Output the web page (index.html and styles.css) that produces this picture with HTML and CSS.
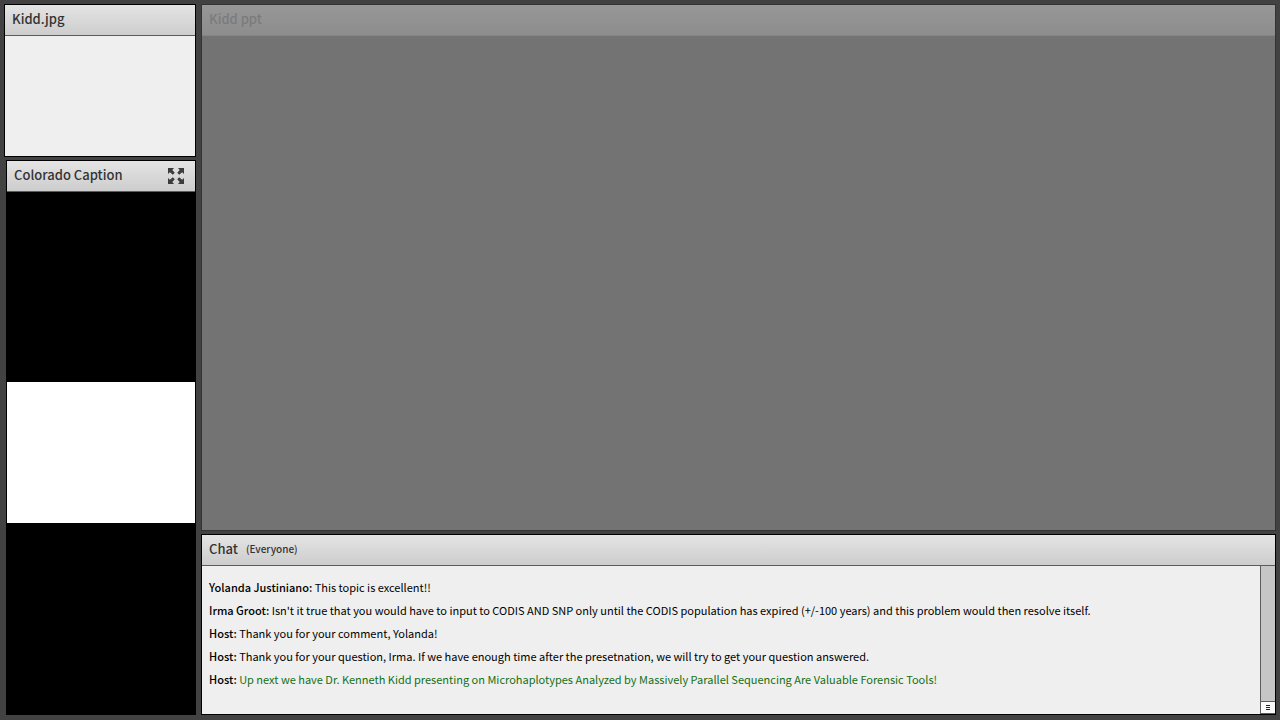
FILE: index.html
```
<!DOCTYPE html>
<html lang="en">
<head>
    <meta charset="UTF-8">
    <meta name="viewport" content="width=device-width, initial-scale=1.0">
    <title>Meeting Room</title>
    <link rel="stylesheet" href="styles.css">
</head>
<body>
    <div class="room">
        <aside class="sidebar">
            <section class="pod photo">
                <header class="pod-header">
                    <h2>Kidd.jpg</h2>
                </header>
                <div class="photo-body"></div>
            </section>
            <section class="pod caption">
                <header class="pod-header">
                    <h2>Colorado Caption</h2>
                    <button type="button" class="expand" aria-label="Full screen">
                        <svg width="16" height="16" viewBox="0 0 16 16" fill="#3c3c3c">
                            <path id="arrow" d="M0 0h6L4.300 1.900 6.800 4.800 4.800 6.800 1.900 4.300 0 6z"/>
                            <use href="#arrow" transform="rotate(90 8 8)"/>
                            <use href="#arrow" transform="rotate(180 8 8)"/>
                            <use href="#arrow" transform="rotate(270 8 8)"/>
                        </svg>
                    </button>
                </header>
                <div class="caption-body">
                    <div class="caption-screen"></div>
                </div>
            </section>
        </aside>
        <main class="stage">
            <section class="pod slides">
                <header class="pod-header">
                    <h2>Kidd ppt</h2>
                </header>
            </section>
            <section class="pod chat">
                <header class="pod-header">
                    <h2>Chat</h2>
                    <span class="audience">(Everyone)</span>
                </header>
                <div class="chat-body">
                    <div class="messages">
                        <p><strong>Yolanda Justiniano:</strong> This topic is excellent!!</p>
                        <p><strong>Irma Groot:</strong> Isn't it true that you would have to input to CODIS AND SNP only until the CODIS population has expired (+/-100 years) and this problem would then resolve itself.</p>
                        <p><strong>Host:</strong> Thank you for your comment, Yolanda!</p>
                        <p><strong>Host:</strong> Thank you for your question, Irma. If we have enough time after the presetnation, we will try to get your question answered.</p>
                        <p><strong>Host:</strong> <span class="notice">Up next we have Dr. Kenneth Kidd presenting on Microhaplotypes Analyzed by Massively Parallel Sequencing Are Valuable Forensic Tools!</span></p>
                    </div>
                    <div class="scrollbar">
                        <button type="button" class="scroll-thumb" aria-label="Scroll">
                            <svg width="5" height="6" viewBox="0 0 5 6" fill="#222">
                                <path d="M0 0h4v1H0zM0 2h4v1H0zM0 4h4v1H0z"/>
                            </svg>
                        </button>
                    </div>
                </div>
            </section>
        </main>
    </div>
</body>
</html>
```
FILE: styles.css
```
* {
    box-sizing: border-box;
}
body {
    margin: 0;
    background-color: #424242;
    color: #000;
    font-family: 'Noto Sans CJK SC', 'Open Sans', sans-serif;
    font-size: 11px;
}
.room {
    display: flex;
    gap: 5px;
    min-height: 100vh;
    padding: 4px 4px 5px;
}
.sidebar {
    display: flex;
    flex-direction: column;
    gap: 3px;
    width: 192px;
    flex-shrink: 0;
}
.stage {
    display: flex;
    flex-direction: column;
    gap: 3px;
    flex: 1;
    min-width: 0;
}
.pod {
    display: flex;
    flex-direction: column;
    border: 1px solid #000;
    background-color: #efefef;
}
.pod-header {
    display: flex;
    align-items: center;
    height: 31px;
    padding: 0 11px 0 7px;
    border-bottom: 1px solid #5c5c5c;
    background: linear-gradient(#e4e4e4, #cdcdcd);
    color: #333;
}
.pod-header h2 {
    margin: 0;
    padding-bottom: 2px;
    font-size: 13px;
    font-weight: 500;
    line-height: 20px;
}
.photo-body {
    height: 120px;
}

/* Caption pod */
.caption {
    flex: 1;
    margin-left: 2px;
}
.expand {
    display: flex;
    margin-left: auto;
    padding: 0;
    border: 0;
    background: none;
    cursor: pointer;
}
.caption-body {
    display: flex;
    flex: 1;
    flex-direction: column;
    justify-content: center;
    padding-bottom: 1px;
    background-color: #000;
}
.caption-screen {
    width: 100%;
    aspect-ratio: 4 / 3;
    background-color: #fff;
}

/* Slides pod, dimmed */
.slides {
    flex: 1;
    border-color: #333;
    background-color: #737373;
}
.slides .pod-header {
    border-bottom-color: #848484;
    background: linear-gradient(#979797, #8d8d8d);
    color: #7b7b7b;
}

/* Chat pod */
.audience {
    margin-left: 8px;
    padding-bottom: 3px;
    font-size: 10px;
    font-weight: 500;
}
.chat-body {
    display: flex;
    flex: 1;
}
.messages {
    flex: 1;
    padding: 10px 7px 23px;
}
.messages p {
    margin: 0;
    line-height: 23px;
}
.messages strong {
    font-weight: 500;
}
.notice {
    color: #147014;
}
.scrollbar {
    display: flex;
    flex-direction: column;
    justify-content: flex-end;
    width: 15px;
    border-left: 1px solid #5c5c5c;
    background-color: #c6c6c6;
}
.scroll-thumb {
    display: flex;
    align-items: center;
    justify-content: center;
    height: 13px;
    padding: 0;
    border: 1px solid #5c5c5c;
    border-width: 1px 0;
    background-color: #fafafa;
}
```
